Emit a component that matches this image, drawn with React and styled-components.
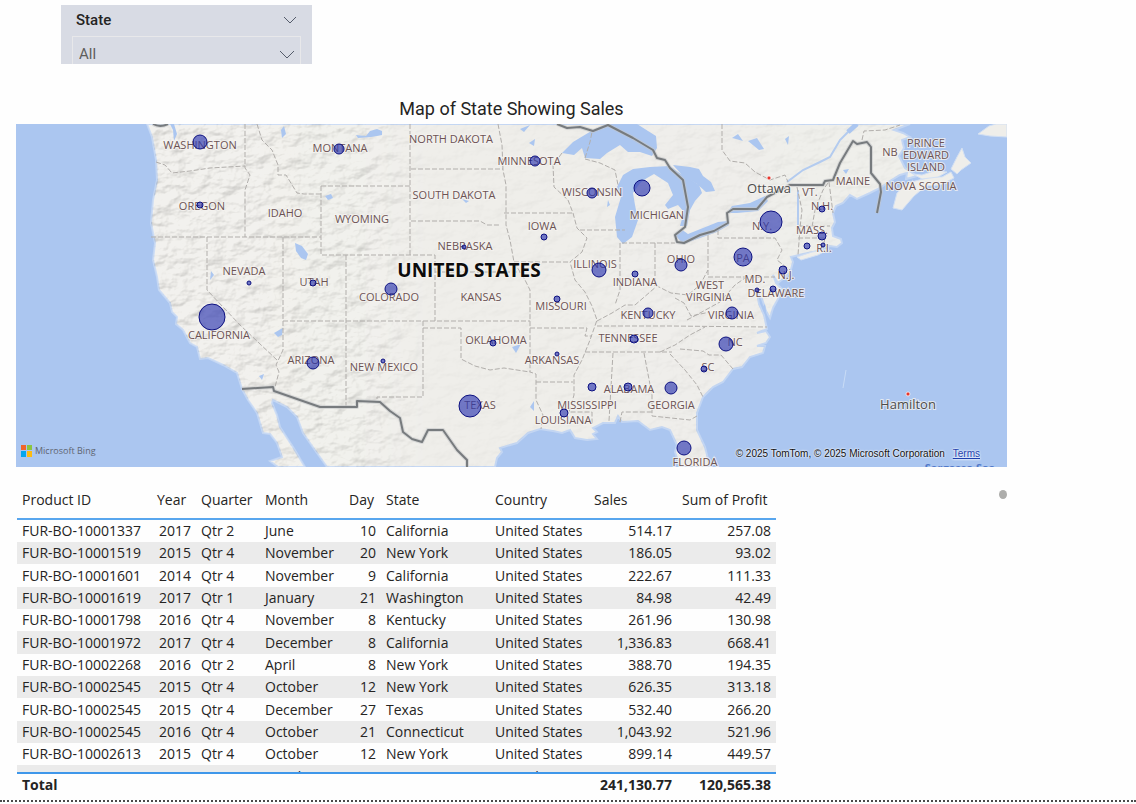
import React, { useState } from "react";
import styled, { createGlobalStyle } from "styled-components";

const GlobalStyle = createGlobalStyle`
  * { box-sizing: border-box; }
  body {
    margin: 0;
    background: #fefefe;
    color: #252423;
    font-family: "Open Sans", "Noto Sans", sans-serif;
    font-size: 14px;
  }
`;

const Page = styled.main`
  display: flex;
  flex-direction: column;
  padding-top: 5px;
  border-bottom: 2px dotted #4a4a4a;
`;

const Slicer = styled.section`
  width: 251px;
  height: 59px;
  margin-left: 61px;
  padding: 0 11px;
  overflow: hidden;
  background: #d8dbe4;
`;

const SlicerHeader = styled.button`
  display: flex;
  align-items: center;
  justify-content: space-between;
  width: 100%;
  height: 31px;
  padding: 0 4px 2px;
  border: 0;
  background: none;
  color: #252423;
  font: 500 15px Roboto, sans-serif;
`;

const SlicerField = styled.label`
  display: grid;
  grid-template-columns: 1fr 21px;
  align-items: center;
  height: 36px;
  border: 1px solid #e8e8ea;
`;

const SlicerSelect = styled.select`
  grid-area: 1 / 1 / 2 / 3;
  appearance: none;
  height: 32px;
  padding: 0 6px;
  border: 0;
  background: transparent;
  color: #605e5c;
  font: 15px Roboto, sans-serif;
`;

const Chevron = styled.svg`
  grid-area: 1 / 2;
  display: block;
  fill: none;
  stroke: #555c6b;
  pointer-events: none;
`;

const MapSection = styled.section`
  margin: 31px 129px 0 16px;
`;

const MapTitle = styled.h2`
  margin: 0;
  padding-bottom: 1px;
  text-align: center;
  color: #252423;
  font: 400 18px/28px Roboto, sans-serif;
`;

const MapFrame = styled.div`
  position: relative;
  overflow: hidden;
  aspect-ratio: 991 / 343;
`;

const MapDrawing = styled.svg`
  display: block;
  width: 100%;
  height: 100%;
  background: #abc6f0;
`;

const StateLabel = styled.text`
  font: 11px "Open Sans", sans-serif;
  fill: #6c5354;
  stroke: #f6f4f1;
  stroke-opacity: 0.75;
  stroke-width: 2px;
  paint-order: stroke;
  text-anchor: middle;
`;

const CountryLabel = styled(StateLabel)`
  font-size: 19px;
  font-weight: 700;
  fill: #0c0c0c;
`;

const CityLabel = styled(StateLabel)`
  font-size: 13px;
  fill: #4c4c4c;
`;

const SeaLabel = styled(StateLabel)`
  font-weight: 700;
  fill: #5279c9;
  stroke: none;
`;

const Brand = styled.div`
  position: absolute;
  left: 5px;
  bottom: 9px;
  display: flex;
  align-items: center;
  gap: 3px;
  color: #5f6570;
  font: 400 9px/14px "Open Sans", sans-serif;
`;

const Credits = styled.div`
  position: absolute;
  right: 27px;
  bottom: 6px;
  display: flex;
  gap: 8px;
  color: #111;
  font: 10px/14px "Liberation Sans", sans-serif;
  text-shadow: 0 0 2px #fff, 0 0 2px #fff;
`;

const TermsLink = styled.a`
  color: #1f3fae;
`;

const TableSection = styled.section`
  display: flex;
  justify-content: space-between;
  margin: 13px 129px 0 17px;
`;

const TableViewport = styled.div`
  height: 320px;
  overflow: hidden;
`;

const ScrollDot = styled.span`
  width: 8px;
  height: 9px;
  margin-top: 10px;
  border-radius: 50%;
  background: #adadab;
`;

const DataTable = styled.table`
  width: 759px;
  table-layout: fixed;
  border-spacing: 0;
`;

const HeadCell = styled.th`
  height: 40px;
  padding: 0 5px;
  border-bottom: 2px solid #58a6ee;
  text-align: left;
  font-weight: 400;
  white-space: nowrap;
`;

const Row = styled.tr`
  height: 22px;
  &:nth-child(3n) { height: 23px; }
  &:nth-child(even) { background: #ebebeb; }
`;

const Cell = styled.td`
  padding: 0 5px;
  line-height: 20px;
  text-align: ${(p) => (p.$numeric ? "right" : "left")};
  white-space: nowrap;
`;

const TotalCell = styled.td`
  position: sticky;
  bottom: 0;
  height: 28px;
  padding: 1px 5px 4px;
  border-top: 2px solid #3f97ea;
  background: #fefefe;
  font-weight: 700;
  line-height: 20px;
  vertical-align: top;
  text-align: ${(p) => (p.$numeric ? "right" : "left")};
`;

const columns = [
  { name: "Product ID", width: 135 },
  { name: "Year", width: 44, numeric: true },
  { name: "Quarter", width: 64 },
  { name: "Month", width: 84 },
  { name: "Day", width: 37, numeric: true },
  { name: "State", width: 109 },
  { name: "Country", width: 99 },
  { name: "Sales", width: 88, numeric: true },
  { name: "Sum of Profit", width: 99, numeric: true },
];

const rows = [
  ["FUR-BO-10001337", 2017, "Qtr 2", "June", 10, "California", "United States", "514.17", "257.08"],
  ["FUR-BO-10001519", 2015, "Qtr 4", "November", 20, "New York", "United States", "186.05", "93.02"],
  ["FUR-BO-10001601", 2014, "Qtr 4", "November", 9, "California", "United States", "222.67", "111.33"],
  ["FUR-BO-10001619", 2017, "Qtr 1", "January", 21, "Washington", "United States", "84.98", "42.49"],
  ["FUR-BO-10001798", 2016, "Qtr 4", "November", 8, "Kentucky", "United States", "261.96", "130.98"],
  ["FUR-BO-10001972", 2017, "Qtr 4", "December", 8, "California", "United States", "1,336.83", "668.41"],
  ["FUR-BO-10002268", 2016, "Qtr 2", "April", 8, "New York", "United States", "388.70", "194.35"],
  ["FUR-BO-10002545", 2015, "Qtr 4", "October", 12, "New York", "United States", "626.35", "313.18"],
  ["FUR-BO-10002545", 2015, "Qtr 4", "December", 27, "Texas", "United States", "532.40", "266.20"],
  ["FUR-BO-10002545", 2016, "Qtr 4", "October", 21, "Connecticut", "United States", "1,043.92", "521.96"],
  ["FUR-BO-10002613", 2015, "Qtr 4", "October", 12, "New York", "United States", "899.14", "449.57"],
  ["FUR-BO-10002824", 2017, "Qtr 1", "March", 31, "Texas", "United States", "825.30", "123.67"],
];

const land =
  "M147 124L152 137L156 160L157 180L153 200L151 223L155 243L153 260L157 277L159 290L170 303L172 312L177 317L176 324L183 330L190 343L197 347L200 359L208 358L223 365L237 373L242 389L248 400L257 413L263 433L270 434L277 443L282 457L270 461L278 467L305 467L293 447L280 427L277 415L272 403L273 400L287 407L297 417L303 433L317 453L327 467L495 467L497 458L502 452L500 448L517 443L528 433L540 429L553 431L562 433L570 430L575 438L587 440L597 439L593 434L597 432L593 428L603 423L615 423L618 416L622 422L638 421L650 430L662 427L670 430L677 445L675 452L680 467L710 467L705 447L697 430L697 413L703 397L713 387L723 382L733 369L742 367L750 357L763 353L765 346L757 346L766 343L770 337L766 331L757 333L767 329L764 315L759 304L757 292L762 299L766 311L770 318L773 308L783 290L776 283L773 275L778 283L790 273L793 262L791 257L803 254L818 251L829 246L837 247L842 243L841 239L833 236L832 228L835 222L833 213L836 206L843 203L850 195L857 199L870 193L880 188L890 181L900 175L907 173L906 179L917 176L905 168L899 156L904 148L902 140L910 137L903 133L894 130L910 124Z";

const islands = [
  "M893 208L897 193L908 183L919 180L931 177L942 177L951 172L954 178L940 185L926 186L914 196L902 210Z",
  "M951 169L957 157L962 148L965 157L971 163L961 170L957 174Z",
  "M913 174L922 175L934 171L947 172L938 177L922 179Z",
  "M978 134L989 126L996 124L1007 124L1007 137L990 136Z",
  "M797 257L812 252L829 249L818 255L801 260Z",
];

const lakes = [
  "M562 153L573 142L593 130L607 124L637 124L648 131L656 136L657 148L652 156L640 152L628 152L620 145L607 153L600 159L585 158L582 148L574 155Z",
  "M617 187L623 175L633 169L650 167L670 166L678 172L688 178L699 185L702 193L695 201L690 210L687 226L680 226L684 212L678 205L668 209L665 205L673 195L668 183L654 174L647 178L640 183L633 193L635 205L638 220L632 237L623 244L617 237L615 217L621 197Z",
  "M673 165L690 167L699 169L703 176L711 182L715 191L706 192L697 184L683 176Z",
  "M675 235L681 229L688 234L703 228L718 222L728 221L729 225L717 232L700 238L683 244Z",
  "M727 213L732 206L750 203L765 196L768 201L758 211L737 213Z",
  "M295 243L302 246L308 254L306 260L301 258L296 251Z",
  "M356 135L366 136L370 131L377 129L382 131L382 135L377 136L371 137L358 138Z",
  "M520 129L530 125L524 132Z",
  "M529 143L535 139L534 146Z",
  "M170 124L174 124L177 134L174 141L173 130Z",
  "M281 130L284 126L286 134L282 138Z",
  "M259 376L264 374L262 380Z",
  "M325 196L331 194L333 198L328 200Z",
  "M211 271L214 275L210 280Z",
  "M274 333L281 329L283 328L282 335L278 337Z",
  "M512 347L521 344L516 353Z",
  "M530 407L534 401L534 411Z",
  "M462 199L469 201L466 203Z",
  "M608 200L610 205L607 207Z",
  "M765 304L767 318L762 308Z",
  "M732 138L738 134L743 141L736 139Z",
  "M748 141L757 138L764 149L759 150Z",
  "M785 139L789 136L788 145Z",
  "M843 170L849 169L846 174Z",
];

const stateLines = [
  "M156 162L165 165L172 173L190 171L210 168L245 166",
  "M245 124V168L250 175L245 190V237",
  "M151 237H321",
  "M257 124L262 140L272 150L278 165V175L286 175L297 193L304 194H321",
  "M321 186H411M321 186V255H435V321",
  "M283 237V350L276 365L279 372L275 387",
  "M207 237V290L240 325L277 360",
  "M346 255V406M283 321H530M423 321V397H377V402",
  "M410 124V255M411 169H503M411 221H480L487 225L500 225",
  "M498 124L502 145L503 170L506 185V225L510 240L514 262L525 280L530 290V372L536 374V400L543 415L541 429",
  "M435 272H520M504 213H573M562 153L553 165L554 187L568 200L573 213L577 228L587 238L582 252L570 262L575 280L585 292L592 306L597 320L590 340L582 360L574 375V395L569 412H592V425",
  "M514 262H570M580 230H625M585 159L600 163L615 170L618 185",
  "M620 243V290L615 305M622 243H675M655 243V286",
  "M597 321L612 313L625 305L635 305L650 292L657 286L671 293L688 295L700 285L708 270",
  "M423 328H461V359L475 366L490 370L504 368L530 372",
  "M530 328H587L585 336H592M536 382H573M597 326H670L767 327",
  "M585 352H672M613 353L609 421M644 353L652 395V416L690 420L697 416M620 422L622 412H652",
  "M670 354L685 370L697 385L703 397M680 349L703 351L709 355H721L733 369",
  "M660 352L675 345L690 335L705 327M687 320L700 313L720 302L735 285L745 278",
  "M708 235V277H775M718 230V238H775L782 250L777 260L790 270",
  "M797 187L802 210L800 228L798 255M828 183L823 190L815 210L812 227M799 226H830M798 238H825L823 248M829 182L833 213",
  "M722 124V150L730 161L745 163L755 172L770 180L785 175L788 182",
  "M862 140L864 131L885 130L900 125",
  "M675 298L684 303L691 316L710 312",
  "M585 158L590 142L592 132",
];

const nationalLines = [
  "M153 124Q160 128 168 124",
  "M242 389L273 387L274 391L320 407H357V401L380 402L390 411L400 418L403 432L412 439L422 442L428 430L443 430L457 450L467 460V467",
  "M557 124L567 128L580 127L593 131L608 125L633 138L653 150L657 158L665 160L670 168L683 180L688 207L685 227L675 235L677 242L684 243L700 235L714 231L728 223L727 213L733 209H757L767 197L790 185H823L825 181L833 180L840 163L853 141L857 144L867 142L871 147V173L880 184L881 192L877 213",
];

const bubbles = [
  [200, 142, 7], [339, 149, 5], [200, 205, 3], [212, 317, 13], [249, 283, 2],
  [313, 283, 3], [313, 363, 6], [383, 361, 2], [391, 289, 6], [470, 406, 11],
  [493, 343, 3], [464, 247, 2], [535, 161, 5], [592, 193, 5], [642, 188, 8],
  [544, 237, 3], [599, 270, 7], [635, 274, 3], [681, 265, 6], [557, 299, 3],
  [648, 313, 5], [634, 339, 4], [557, 354, 2], [592, 387, 4], [628, 387, 4],
  [671, 388, 6], [564, 413, 4], [684, 448, 7], [704, 369, 3], [726, 344, 7],
  [732, 313, 6], [757, 290, 2], [773, 289, 3], [783, 270, 4], [743, 257, 9],
  [771, 222, 11], [807, 246, 3], [823, 245, 2], [822, 236, 4], [822, 209, 3],
];

const labels = [
  ["WASHINGTON", 200, 149], ["MONTANA", 340, 152], ["OREGON", 202, 210],
  ["IDAHO", 285, 217], ["WYOMING", 362, 223], ["NORTH DAKOTA", 451, 143],
  ["SOUTH DAKOTA", 454, 199], ["MINNESOTA", 529, 165], ["WISCONSIN", 592, 196],
  ["MICHIGAN", 657, 219], ["IOWA", 542, 230], ["NEBRASKA", 465, 250],
  ["NEVADA", 244, 275], ["UTAH", 314, 286], ["COLORADO", 389, 301],
  ["KANSAS", 481, 301], ["ILLINOIS", 595, 268], ["INDIANA", 635, 286],
  ["OHIO", 681, 263], ["MISSOURI", 561, 310], ["KENTUCKY", 648, 319],
  ["CALIFORNIA", 219, 339], ["ARIZONA", 311, 364], ["NEW MEXICO", 384, 371],
  ["OKLAHOMA", 496, 344], ["ARKANSAS", 552, 364], ["TENNESSEE", 628, 342],
  ["TEXAS", 480, 409], ["LOUISIANA", 563, 424], ["MISSISSIPPI", 587, 409],
  ["ALABAMA", 629, 393], ["GEORGIA", 671, 409], ["FLORIDA", 695, 466],
  ["SC", 708, 371], ["NC", 735, 346], ["VIRGINIA", 731, 319],
  ["WEST", 710, 289], ["VIRGINIA", 709, 301], ["DELAWARE", 776, 297],
  ["MD.", 755, 283], ["N.J.", 786, 279], ["PA", 743, 262], ["N.Y.", 762, 230],
  ["MASS.", 812, 234], ["R.I.", 824, 252], ["N.H.", 822, 210], ["VT.", 810, 196],
  ["MAINE", 853, 185], ["NB", 890, 156], ["PRINCE", 926, 147],
  ["EDWARD", 926, 159], ["ISLAND", 926, 171], ["NOVA SCOTIA", 921, 190],
];

function SalesMap() {
  return (
    <MapDrawing viewBox="16 124 991 343" preserveAspectRatio="xMidYMid slice" role="img" aria-label="Sales by state">
      <defs>
        <filter id="relief" x="0" y="0" width="100%" height="100%" colorInterpolationFilters="sRGB">
          <feTurbulence type="fractalNoise" baseFrequency="0.05 0.08" numOctaves="4" seed="8" />
          <feColorMatrix values="0 0 0 0 0  0 0 0 0 0  0 0 0 0 0  1 0 0 0 0" />
          <feDiffuseLighting surfaceScale="4" diffuseConstant="1.27" lightingColor="#f2f1ee">
            <feDistantLight azimuth="225" elevation="52" />
          </feDiffuseLighting>
        </filter>
        <linearGradient id="reliefFade" x1="140" x2="800" y1="0" y2="0" gradientUnits="userSpaceOnUse">
          <stop offset="0" stopColor="#fff" stopOpacity="0.2" />
          <stop offset="0.34" stopColor="#fff" stopOpacity="0.17" />
          <stop offset="0.44" stopColor="#fff" stopOpacity="0.03" />
          <stop offset="1" stopColor="#fff" stopOpacity="0.06" />
        </linearGradient>
        <mask id="reliefMask">
          <rect x="16" y="124" width="991" height="343" fill="url(#reliefFade)" />
        </mask>
        <clipPath id="landClip">
          <path d={land} />
        </clipPath>
      </defs>
      <path d={land} fill="#efeeea" stroke="#c3d6f3" strokeWidth="2" />
      <g clipPath="url(#landClip)">
        <g mask="url(#reliefMask)">
          <rect x="140" y="124" width="790" height="343" filter="url(#relief)" />
        </g>
      </g>
      {islands.map((d) => (
        <path key={d} d={d} fill="#efeeea" stroke="#d3e0f3" />
      ))}
      {lakes.map((d) => (
        <path key={d} d={d} fill="#abc6f0" />
      ))}
      <path d="M787 182L803 170L820 162L830 157L840 140L848 132L857 124M798 190V225" fill="none" stroke="#b3cbef" strokeWidth="2" />
      <path d="M848 132L857 124" stroke="#abc6f0" strokeWidth="5" />
      <path d="M846 370L843 388" stroke="#c9dcf6" />
      <g fill="none" stroke="#b1aeab" strokeDasharray="5 2">
        {stateLines.map((d) => (
          <path key={d} d={d} />
        ))}
      </g>
      <g fill="none" strokeLinejoin="round">
        {nationalLines.map((d) => (
          <g key={d}>
            <path d={d} stroke="#c4c6c8" strokeWidth="4" strokeOpacity="0.6" />
            <path d={d} stroke="#777b7e" strokeWidth="2" />
          </g>
        ))}
      </g>
      {labels.map(([name, x, y]) => (
        <StateLabel key={name + y} x={x} y={y}>{name}</StateLabel>
      ))}
      <CountryLabel x="469" y="277">UNITED STATES</CountryLabel>
      <g fill="#e8352b" stroke="#fff" strokeOpacity="0.7">
        <circle cx="769" cy="178" r="2" />
        <circle cx="908" cy="394" r="2" />
      </g>
      <CityLabel x="769" y="193">Ottawa</CityLabel>
      <CityLabel x="908" y="409">Hamilton</CityLabel>
      <SeaLabel x="960" y="472">Sargasso Sea</SeaLabel>
      <g fill="#2c38b0" fillOpacity="0.65" stroke="#0d1180" strokeWidth="1">
        {bubbles.map(([x, y, r]) => (
          <circle key={`${x}-${y}`} cx={x} cy={y} r={r} />
        ))}
      </g>
    </MapDrawing>
  );
}

function BingLogo() {
  return (
    <svg width="11" height="12" viewBox="0 0 11 12" aria-hidden="true">
      <path d="M0 0H5V5H0Z" fill="#f1652a" />
      <path d="M6 0H11V5H6Z" fill="#8bc53f" />
      <path d="M0 6H5V12H0Z" fill="#05a6f0" />
      <path d="M6 6H11V12H6Z" fill="#fdbb12" />
    </svg>
  );
}

export default function App() {
  const [state, setState] = useState("All");
  return (
    <>
      <GlobalStyle />
      <Page>
        <Slicer>
          <SlicerHeader type="button">
            State
            <Chevron width="14" height="8" viewBox="0 0 14 8">
              <path d="M1 1L7 7L13 1" />
            </Chevron>
          </SlicerHeader>
          <SlicerField>
            <SlicerSelect aria-label="State" value={state} onChange={(e) => setState(e.target.value)}>
              <option>All</option>
              <option>California</option>
              <option>New York</option>
              <option>Texas</option>
            </SlicerSelect>
            <Chevron width="16" height="9" viewBox="0 0 16 9">
              <path d="M1 1L8 8L15 1" />
            </Chevron>
          </SlicerField>
        </Slicer>
        <MapSection>
          <MapTitle>Map of State Showing Sales</MapTitle>
          <MapFrame>
            <SalesMap />
            <Brand>
              <BingLogo />
              Microsoft Bing
            </Brand>
            <Credits>
              <span>© 2025 TomTom, © 2025 Microsoft Corporation</span>
              <TermsLink href="#terms">Terms</TermsLink>
            </Credits>
          </MapFrame>
        </MapSection>
        <TableSection>
          <TableViewport>
            <DataTable>
              <colgroup>
                {columns.map((c) => (
                  <col key={c.name} width={c.width} />
                ))}
              </colgroup>
              <thead>
                <tr>
                  {columns.map((c) => (
                    <HeadCell key={c.name} scope="col">{c.name}</HeadCell>
                  ))}
                </tr>
              </thead>
              <tbody>
                {rows.map((row, i) => (
                  <Row key={i}>
                    {row.map((value, j) => (
                      <Cell key={j} $numeric={columns[j].numeric}>{value}</Cell>
                    ))}
                  </Row>
                ))}
              </tbody>
              <tfoot>
                <tr>
                  <TotalCell colSpan={7}>Total</TotalCell>
                  <TotalCell $numeric>241,130.77</TotalCell>
                  <TotalCell $numeric>120,565.38</TotalCell>
                </tr>
              </tfoot>
            </DataTable>
          </TableViewport>
          <ScrollDot />
        </TableSection>
      </Page>
    </>
  );
}
